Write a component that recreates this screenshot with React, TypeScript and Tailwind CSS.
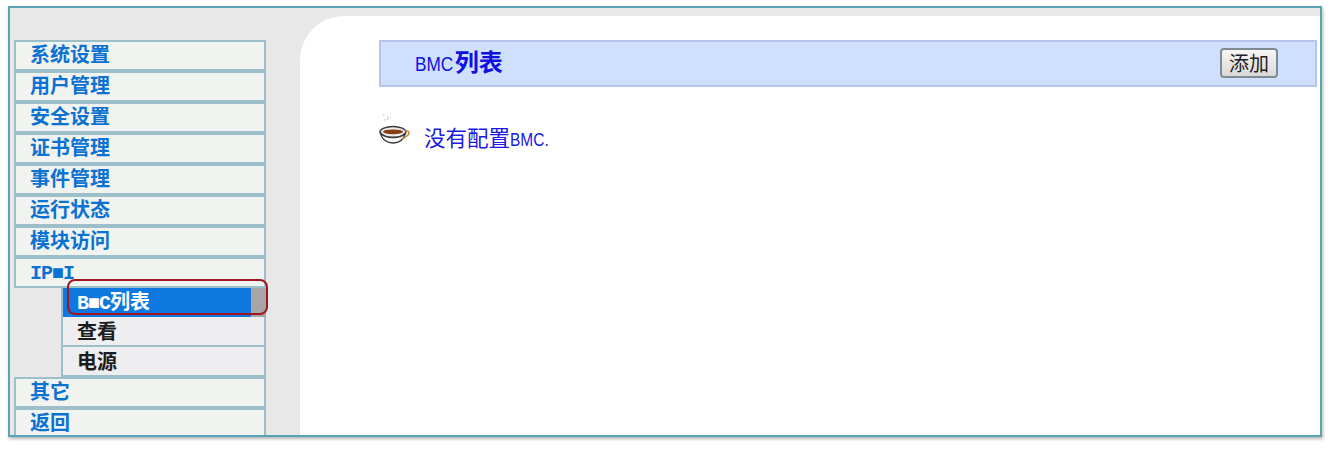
const topItems = ["系统设置", "用户管理", "安全设置", "证书管理", "事件管理", "运行状态", "模块访问"];
const cjk = "font-['Noto_Sans_CJK_SC',sans-serif]";
const mono = "font-['Liberation_Mono',monospace] text-[20px] tracking-[-1px]";

function MainItem({ label, latin }: { label: string; latin?: boolean }) {
  return (
    <div className={`h-[31px] shrink-0 border-2 border-[#9dbfc9] bg-[#f1f3f1] pl-[14px] text-[20px] leading-[23px] font-bold text-[#0b72d2] ${cjk}`}>
      {latin ? <span className={mono}>{label}</span> : label}
    </div>
  );
}

function SubItem({ label }: { label: string }) {
  return (
    <div className={`h-[30px] border-b-2 border-r-2 border-[#9dbfc9] bg-[#eeeef0] pl-[14px] text-[20px] leading-[27px] font-bold text-[#1c1c1c] ${cjk}`}>
      {label}
    </div>
  );
}

function Cup() {
  return (
    <svg width="32" height="36" viewBox="0 0 32 36" className="shrink-0">
      <g stroke="#b8b8b8" strokeWidth="1.1" fill="none" strokeDasharray="1.5 1.5">
        <path d="M4 2l3 1M8 4l4 1M5 7l6-1" />
      </g>
      <ellipse cx="14" cy="19" rx="13" ry="5.5" fill="#ececec" stroke="#3a3a3a" strokeWidth="1.4" />
      <ellipse cx="14" cy="18.8" rx="10" ry="2.4" fill="#8a3d16" />
      <path d="M1.5 20c1 6 6 10 12.5 10s11-4 12.5-10c-2.5 3-7 4.5-12.5 4.5S4 23 1.5 20z" fill="#f8f8f8" stroke="#3a3a3a" strokeWidth="1.3" />
      <path d="M26 18c4-1 5 2 3 4s-4 3-6 4" fill="none" stroke="#c08a3e" strokeWidth="1.6" />
    </svg>
  );
}

export default function App() {
  return (
    <div className="h-[449px] w-[1330px] overflow-hidden bg-white pl-[8px] pt-[6px]">
      <div className="flex h-[431px] w-[1314px] overflow-hidden border-2 border-[#58a4b6] bg-[#e8e8e8] shadow-[1px_2px_3px_rgba(120,120,120,0.55)]">
        <aside className="flex w-[290px] shrink-0 flex-col pl-[4px] pr-[34px] pt-[32px]">
          {topItems.map((t) => (
            <MainItem key={t} label={t} />
          ))}
          <MainItem label="IP■I" latin />
          <div className="relative ml-[47px] flex shrink-0 flex-col border-l-2 border-[#9dbfc9]">
            <div className="flex h-[29px] items-stretch">
              <div className={`flex-1 bg-[#0f78e0] pl-[14px] text-[20px] leading-[25px] font-bold text-white ${cjk}`}>
                <span className={mono}>B■C</span>列表
              </div>
              <div className="w-[15px] bg-[#a6a6a6]" />
            </div>
            <SubItem label="查看" />
            <SubItem label="电源" />
            <div className="absolute left-[4px] top-[-9px] h-[36px] w-[201px] rounded-[8px] border-2 border-[#a31420]" />
          </div>
          <MainItem label="其它" />
          <MainItem label="返回" />
        </aside>
        <div className="mt-[8px] min-w-0 flex-1 rounded-tl-[44px] bg-white pl-[79px] pr-[3px] pt-[24px]">
          <div className="flex h-[47px] items-center justify-between border-2 border-[#b8c2ea] bg-[#cfe0fe] pl-[34px] pr-[37px]">
            <h1 className="mb-[3px] font-['Noto_Sans_CJK_SC',sans-serif] text-[24px] font-bold leading-[30px] text-[#1010e0]">
              <span className="mr-[-7px] inline-block origin-left scale-x-[0.82] font-['Liberation_Sans',sans-serif] text-[21px] font-normal">BMC</span>列表
            </h1>
            <button className="mb-[1px] h-[30px] w-[58px] rounded-[4px] border-2 border-[#7f8a92] bg-gradient-to-b from-[#f6f6f6] to-[#d9d9d9] font-['Noto_Sans_CJK_SC',sans-serif] text-[20px] leading-[22px] text-[#222222]">
              添加
            </button>
          </div>
          <div className="mt-[26px] flex items-start">
            <Cup />
            <p className="ml-[13px] mt-[10px] font-['Noto_Sans_CJK_SC',sans-serif] text-[21.5px] leading-[28px] text-[#1a1ae0]">
              没有配置<span className="inline-block origin-left scale-x-[0.86] font-['Liberation_Sans',sans-serif] text-[18px]">BMC.</span>
            </p>
          </div>
        </div>
      </div>
    </div>
  );
}
